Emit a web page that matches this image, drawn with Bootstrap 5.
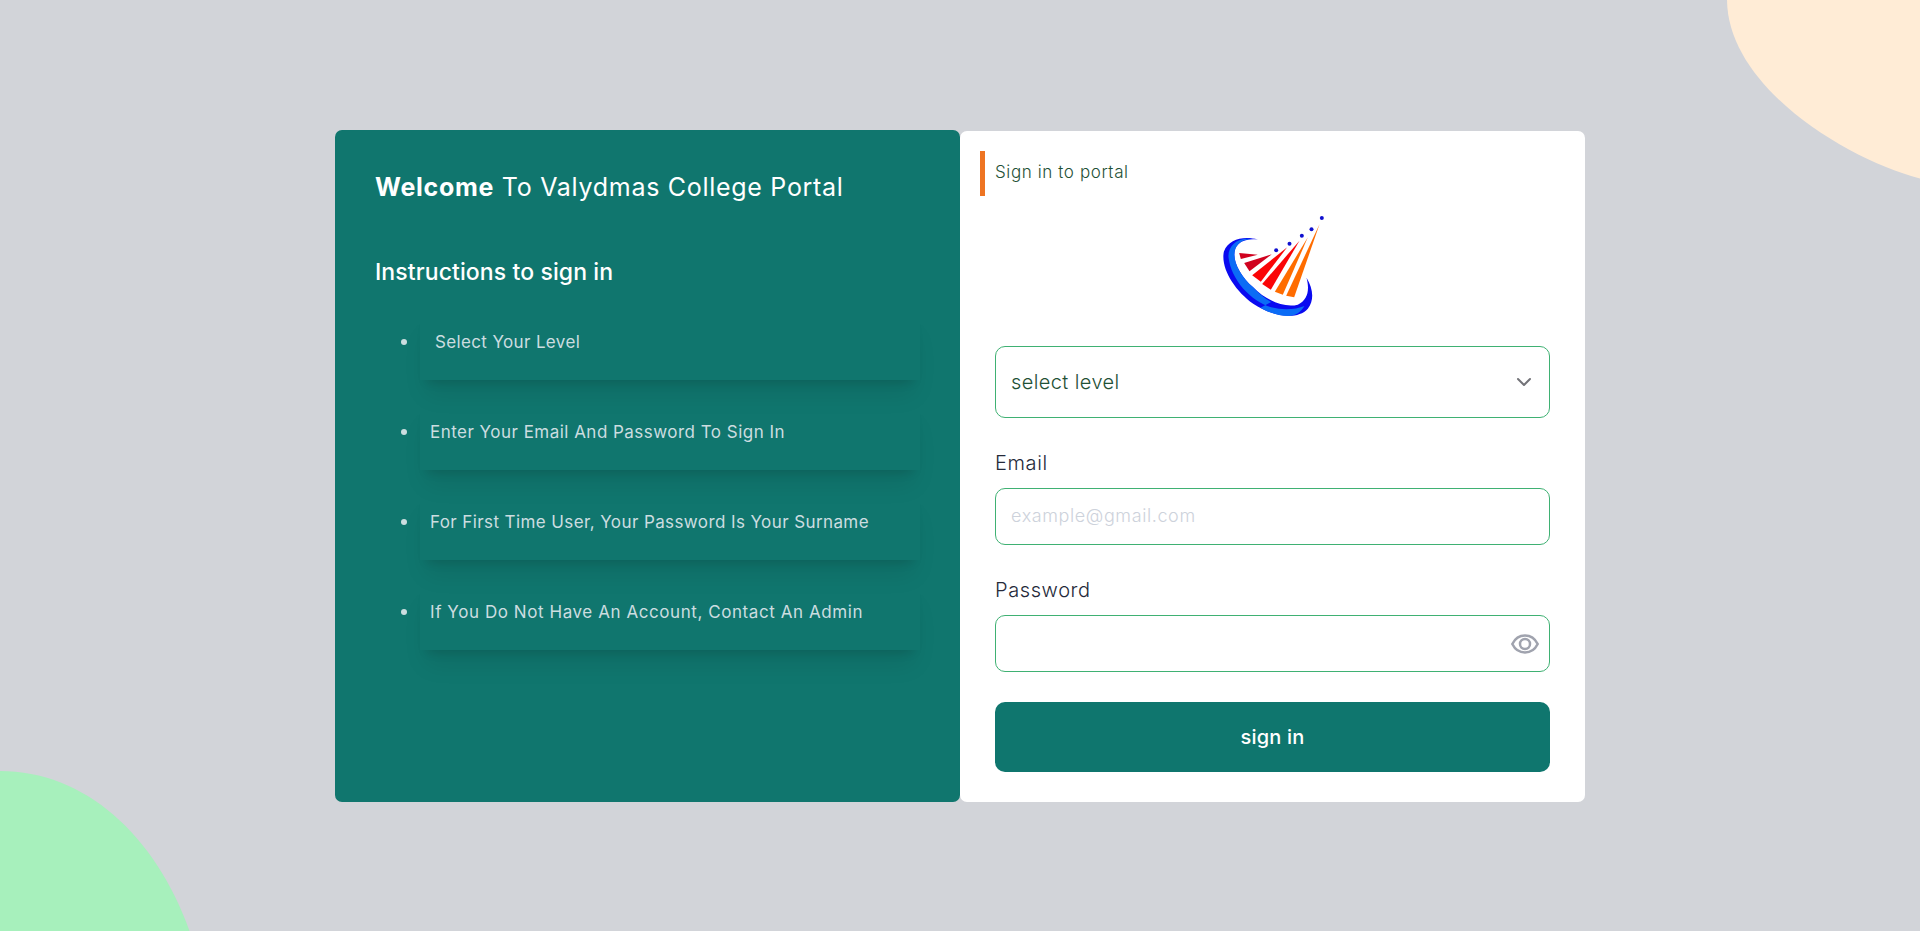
<!DOCTYPE html>
<html lang="en">
<head>
<meta charset="utf-8">
<meta name="viewport" content="width=device-width, initial-scale=1">
<title>Valydmas College Portal</title>
<link href="https://cdn.jsdelivr.net/npm/bootstrap@5.3.0/dist/css/bootstrap.min.css" rel="stylesheet">
<style>
  body { font-family: Inter, "Open Sans", sans-serif; background: #d2d4d9; font-weight: 400; }
  .stage { height: 931px; padding-top: 130px; }
  .blob-peach { width: 193px; height: 179px; }
  .blob-green { width: 190px; height: 160px; }
  .portal { width: 1250px; height: 672px; z-index: 1; }
  .pane { width: 625px; border-radius: 7px; }
  .pane-info { background: #10766e; padding: 40px; color: #fff; }
  .pane-form { background: #fff; padding: 20px 35px 30px; margin-top: 1px; }
  .title-line { font-size: 25px; line-height: 34px; letter-spacing: .71px; }
  .sub-line { font-size: 23px; line-height: 36px; margin-top: 50px; font-weight: 450; letter-spacing: .1px; }
  .steps { margin: 20px 0 0; padding: 0 0 0 26px; }
  .steps li { color: #ccdde0; font-size: 17px; line-height: 24px; margin-bottom: 20px; letter-spacing: .475px; }
  .steps li:nth-child(1) { letter-spacing: .36px; }
  .steps li:nth-child(3) { letter-spacing: .4px; }
  .steps li:nth-child(4) { letter-spacing: .57px; }
  .steps li::before { content: ""; width: 6px; height: 6px; border-radius: 50%; background: #ccdde0; margin: 0 13px 6px 0; }
  .step-box { width: 500px; height: 70px; padding: 20px 10px; box-shadow: 0 20px 25px -6px rgba(0,0,0,.08), 0 9px 10px -7px rgba(0,0,0,.12); }
  .step-first { padding-left: 15px; }
  .heading-bar { height: 45px; margin-left: -15px; border-left: 5px solid #ee7422; padding: 0 0 2px 10px; color: #1f5136; font-size: 17px; font-weight: 350; letter-spacing: .6px; }
  .logo { margin: 4px auto 16px; }
  .field { border: 1px solid #3fb173; border-radius: 10px; height: 57px; padding: 0 15px; background: #fff; }
  .field:focus { box-shadow: none; }
  .field-select { height: 72px; font-size: 20px; color: #1f5136; font-weight: 350; letter-spacing: .4px; }
  .field-label { font-size: 20px; line-height: 30px; margin: 30px 0 10px; color: #252a3a; font-weight: 350; letter-spacing: .6px; }
  .field-mail { font-size: 18px; letter-spacing: .6px; font-weight: 350; padding-bottom: 2px; }
  .field-mail::placeholder { color: #cdd2db; opacity: 1; }
  .chevron { margin-right: 2px; }
  .eye { right: 10px; top: 14px; }
  .btn-enter { margin-top: 30px; height: 70px; border-radius: 10px; background: #0f766e; color: #fff; font-size: 20px; border: 0; font-weight: 450; letter-spacing: .2px; }
</style>
</head>
<body>
<main class="stage position-relative overflow-hidden d-flex justify-content-center align-items-start">
  <svg class="blob-peach position-absolute top-0 end-0" viewBox="1727 0 193 179"><path d="M1727 0C1728 88 1848 160 1920 178.500V0Z" fill="#ffecd6"/></svg>
  <svg class="blob-green position-absolute bottom-0 start-0" viewBox="0 771 190 160"><path d="M0 771C85 771 155 835 189.500 931H0Z" fill="#a7f0bc"/></svg>
  <div class="portal d-flex position-relative">
    <section class="pane pane-info">
      <h1 class="title-line mb-0 fw-normal text-nowrap"><b>Welcome</b> To Valydmas College Portal</h1>
      <h2 class="sub-line mb-0">Instructions to sign in</h2>
      <ul class="steps list-unstyled">
        <li class="d-flex align-items-center text-nowrap"><div class="step-box step-first">Select Your Level</div></li>
        <li class="d-flex align-items-center text-nowrap"><div class="step-box">Enter Your Email And Password To Sign In</div></li>
        <li class="d-flex align-items-center text-nowrap"><div class="step-box">For First Time User, Your Password Is Your Surname</div></li>
        <li class="d-flex align-items-center text-nowrap"><div class="step-box">If You Do Not Have An Account, Contact An Admin</div></li>
      </ul>
    </section>
    <section class="pane pane-form">
      <div class="heading-bar d-flex align-items-center">Sign in to portal</div>
      <svg class="logo d-block" width="150" height="130" viewBox="-7.500 0 450 390">
        <path fill="#0a0af0" d="M172 119C130 107 84 118 70 155C60 205 103 272 158 311C215 349 290 362 322 326C342 300 338 265 318 233C328 270 322 300 292 314C250 325 195 300 158 262C112 222 84 162 114 132C127 120 150 116 172 119Z"/>
        <path fill="#0b6cf5" d="M152 117C110 112 82 138 84 172C92 240 150 303 212 322C250 332 287 328 312 318C300 338 285 348 262 348C235 347 205 338 180 323L212 306C190 295 172 277 158 262C112 222 84 162 114 132C124 122 137 118 152 117Z"/>
        <g fill="#d0021f"><path d="M116 159L172 164L121 177Z"/><path d="M131 189L214 163L147 214Z"/></g>
        <g fill="#fa0507"><path d="M155 226L260 142L181 245Z"/><path d="M185 252L297 122L211 269Z"/></g>
        <g fill="#ff6c00"><path d="M223 275L322 112L247 284Z"/><path d="M257 287L357 73L281 292Z"/></g>
        <g fill="#1010cf"><circle cx="227" cy="151" r="6"/><circle cx="267" cy="131" r="6"/><circle cx="304" cy="107" r="6"/><circle cx="333" cy="88" r="6"/><circle cx="364" cy="54" r="6"/></g>
      </svg>
      <div class="field field-select d-flex align-items-center justify-content-between">select level
        <svg class="chevron" width="16" height="16" viewBox="0 0 16 16" fill="none" stroke="#737378" stroke-width="2" stroke-linecap="round" stroke-linejoin="round"><path d="M2 5l6 6 6-6"/></svg>
      </div>
      <label class="field-label d-block" for="email">Email</label>
      <input id="email" class="field field-mail form-control" type="email" placeholder="example@gmail.com">
      <label class="field-label d-block" for="pass">Password</label>
      <div class="position-relative">
        <input id="pass" class="field form-control" type="password">
        <svg class="eye position-absolute" width="30" height="30" viewBox="0 0 30 30" fill="none" stroke="#a0a3ae" stroke-width="2.500"><path d="M2.300 15C5 9.500 9.500 6.500 15 6.500S25 9.500 27.700 15C25 20.500 20.500 23.500 15 23.500S5 20.500 2.300 15Z"/><circle cx="15" cy="15" r="5"/></svg>
      </div>
      <button class="btn btn-enter w-100" type="button">sign in</button>
    </section>
  </div>
</main>
<script src="https://cdn.jsdelivr.net/npm/bootstrap@5.3.0/dist/js/bootstrap.bundle.min.js"></script>
</body>
</html>
